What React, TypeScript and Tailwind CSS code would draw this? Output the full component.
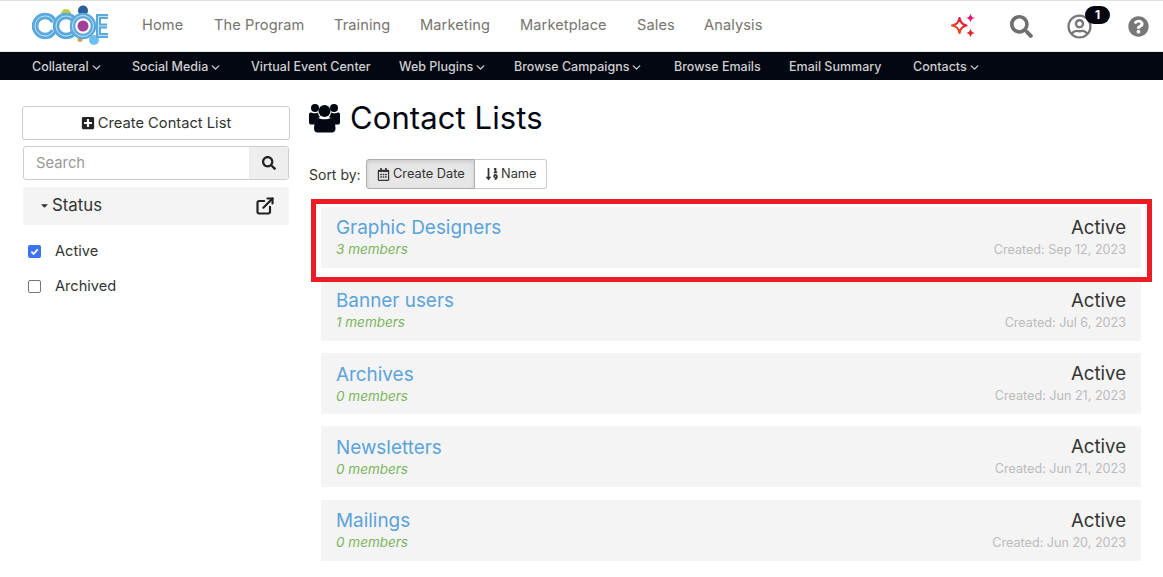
import { FaSearch, FaPlusSquare, FaRegCalendarAlt, FaSortNumericDown, FaQuestionCircle, FaRegUserCircle, FaCaretDown } from "react-icons/fa";
import { FiExternalLink, FiChevronDown } from "react-icons/fi";

const top = [
  ["Home", "w-[72px]"],
  ["The Program", "w-[120px]"],
  ["Training", "w-[86px]"],
  ["Marketing", "w-[100px]"],
  ["Marketplace", "w-[117px]"],
  ["Sales", "w-[67px]"],
  ["Analysis", "w-[70px]"],
];

const sub: [string, string, boolean][] = [
  ["Collateral", "w-[100px]", true],
  ["Social Media", "w-[119px]", true],
  ["Virtual Event Center", "w-[148px]", false],
  ["Web Plugins", "w-[115px]", true],
  ["Browse Campaigns", "w-[160px]", true],
  ["Browse Emails", "w-[115px]", false],
  ["Email Summary", "w-[124px]", false],
  ["Contacts", "w-[80px]", true],
];

const rows = [
  ["Graphic Designers", "3 members", "Created: Sep 12, 2023"],
  ["Banner users", "1 members", "Created: Jul 6, 2023"],
  ["Archives", "0 members", "Created: Jun 21, 2023"],
  ["Newsletters", "0 members", "Created: Jun 21, 2023"],
  ["Mailings", "0 members", "Created: Jun 20, 2023"],
];

function Ring({ cx }: { cx: number }) {
  return (
    <g fill="none" strokeDasharray="53 9.8" strokeDashoffset="-4.9">
      <circle cx={cx} cy="21" r="10" stroke="#5aa9dc" strokeWidth="6.5" />
      <circle cx={cx} cy="21" r="10" stroke="#c4e2f5" strokeWidth="1" />
    </g>
  );
}

function Logo() {
  return (
    <svg width="80" height="42" viewBox="0 0 80 42" className="shrink-0">
      <circle cx="34" cy="9" r="5" fill="#bfcf3c" />
      <circle cx="51" cy="5.5" r="5" fill="#2d5f9c" />
      <circle cx="48" cy="34.5" r="2.5" fill="#d6a24a" />
      <Ring cx={13} />
      <Ring cx={34} />
      <circle cx="51" cy="21" r="10.5" fill="#fff" stroke="#5aa9dc" strokeWidth="5.500" />
      <circle cx="51" cy="21" r="10.5" fill="none" stroke="#c4e2f5" strokeWidth="1" />
      <circle cx="51" cy="21" r="5.5" fill="#a43f98" />
      <circle cx="62" cy="35" r="5" fill="#6cc0ee" />
      <path d="M76 11.5H66.5V30.5H76M66.5 21H75" fill="none" stroke="#5aa9dc" strokeWidth="5" />
      <path d="M76 11.5H66.5V30.5H76M66.5 21H75" fill="none" stroke="#c4e2f5" strokeWidth="1" />
    </svg>
  );
}

function Sparkles() {
  return (
    <svg width="26" height="26" viewBox="0 0 26 26">
      <defs>
        <linearGradient id="sp" x1="0" y1="1" x2="1" y2="0">
          <stop offset="0" stopColor="#e8641c" />
          <stop offset="0.6" stopColor="#e5262c" />
          <stop offset="1" stopColor="#e9156f" />
        </linearGradient>
      </defs>
      <path d="M9.5 5 C10.3 9.5 12 11.6 16.5 12.5 C12 13.4 10.3 15.5 9.5 20 C8.7 15.5 7 13.4 2 12.5 C7 11.6 8.7 9.5 9.5 5Z" fill="none" stroke="url(#sp)" strokeWidth="2.2" strokeLinejoin="round" />
      <path d="M20.5 0.5 C21 3.4 22 4.4 25 5 C22 5.6 21 6.6 20.5 9.5 C20 6.6 19 5.6 16 5 C19 4.4 20 3.4 20.5 0.5Z" fill="#e9156f" />
      <path d="M20.5 15.5 C21 18.4 22 19.4 25 20 C22 20.6 21 21.6 20.5 24.5 C20 21.6 19 20.6 16 20 C19 19.4 20 18.4 20.5 15.5Z" fill="#e5262c" />
    </svg>
  );
}

function UsersIcon() {
  return (
    <svg width="33" height="31" viewBox="0 0 33 31" className="shrink-0" fill="#030711">
      <circle cx="7" cy="6" r="4" />
      <circle cx="26" cy="6" r="4" />
      <circle cx="16.5" cy="9" r="6" />
      <path d="M1 12.5c0-1.5 1-2 2-2 1.5 1 6 1 7 0 .3 2 1 3.5 2 4.5-3.5 1.5-5 4-5.5 7.5H2.5C1.5 22.500 1 21.500 1 20z" />
      <path d="M32 12.500c0-1.500-1-2-2-2-1.500 1-6 1-7 0-.3 2-1 3.500-2 4.500 3.500 1.500 5 4 5.500 7.500h4c1 0 1.500-1 1.500-2.500z" />
      <path d="M10.500 16c2.500 1.800 9.500 1.800 12 0 2.500 .3 4 2.500 4.500 5l.500 5.500c0 2.500-1.500 4-3.500 4H9.500c-2 0-3.500-1.500-3.500-4l.5-5.500c.5-2.500 2-4.700 4-5z" />
    </svg>
  );
}

export default function App() {
  return (
    <div className="relative w-[1163px] h-[577px] overflow-hidden bg-white text-[#333] font-['Inter','Liberation_Sans',sans-serif]">
      <header className="h-[52px] border-t border-t-[#e0e0e0] border-b border-b-[#e4e4e4] flex items-center">
        <div className="ml-[32px] w-[110px]"><Logo /></div>
        <nav className="flex items-center">
          {top.map(([t, w]) => (
            <div key={t} className={`${w} text-[14.6px] text-[#77736f] tracking-[0.1px] whitespace-nowrap`}>{t}</div>
          ))}
        </nav>
        <div className="ml-auto flex items-center">
          <div className="mr-[34px]"><Sparkles /></div>
          <FaSearch className="text-[23px] text-[#6f6f6f] mr-[34px]" />
          <div className="relative mr-[36px]">
            <FaRegUserCircle className="text-[25px] text-[#777]" />
            <span className="absolute -top-[8px] left-[18px] w-[25px] h-[18px] rounded-full bg-[#04070f] text-white text-[12px] font-bold flex items-center justify-center">1</span>
          </div>
          <FaQuestionCircle className="text-[21px] text-[#777] mr-[14px]" />
        </div>
      </header>
      <nav className="h-[28px] bg-[#030711] flex items-center pl-[32px] pt-[2px]">
        {sub.map(([t, w, c]) => (
          <div key={t} className={`${w} flex items-center gap-[1px] text-[12.5px] font-medium text-[#cfcfcf] whitespace-nowrap`}>
            {t}
            {c && <FiChevronDown className="text-[13px] stroke-[2.5]" />}
          </div>
        ))}
      </nav>
      <div className="flex">
        <aside className="ml-[22px] w-[268px] pt-[26px] shrink-0 text-[#333]">
          <button className="w-full h-[34px] border border-[#ccc] rounded-[3px] flex items-center justify-center gap-[3px] text-[14.7px]">
            <FaPlusSquare className="text-[14px] text-[#222]" /> Create Contact List
          </button>
          <div className="mx-px mt-[6px] h-[34px] border border-[#ccc] rounded-[3px] flex overflow-hidden">
            <div className="flex-1 pl-[12px] flex items-center text-[14.8px] text-[#999]">Search</div>
            <div className="w-[39px] bg-[#eee] flex items-center justify-center"><FaSearch className="text-[14px] text-[#222]" /></div>
          </div>
          <div className="mx-px mt-[7px] h-[38px] bg-[#f4f4f4] flex items-center pl-[16px] pr-[14px] pb-[1px]">
            <FaCaretDown className="text-[11px] text-[#333] mr-[2px]" />
            <span className="text-[16.8px]">Status</span>
            <FiExternalLink className="ml-auto text-[20px] text-[#222] stroke-[2.6]" />
          </div>
          <div className="mt-[18px] flex items-center h-[17px] pl-[6px]">
            <span className="w-[13px] h-[13px] rounded-[2px] bg-[#3b71f3] flex items-center justify-center">
              <svg width="9" height="9" viewBox="0 0 10 10"><path d="M1.5 5.2 4 7.7 8.6 2.6" fill="none" stroke="#fff" strokeWidth="2" /></svg>
            </span>
            <span className="ml-[14px] text-[14.6px]">Active</span>
          </div>
          <div className="mt-[18px] flex items-center h-[17px] pl-[6px]">
            <span className="w-[13px] h-[13px] rounded-[2px] border border-[#767676] bg-white" />
            <span className="ml-[14px] text-[14.6px]">Archived</span>
          </div>
        </aside>
        <main className="ml-[19px] w-[832px] pt-[17px]">
          <div className="flex items-center h-[40px]">
            <div className="-ml-px mr-px"><UsersIcon /></div>
            <h1 className="ml-[8px] text-[31px] text-[#030711] leading-none tracking-[0.1px]">Contact Lists</h1>
          </div>
          <div className="mt-[22px] flex items-center h-[30px]">
            <span className="text-[14px] w-[57px]">Sort by:</span>
            <div className="flex items-center gap-[3px] h-[30px] w-[109px] pl-[10px] bg-[#e6e6e6] border border-[#adadad] rounded-l-[3px] shadow-[inset_0_2px_4px_rgba(0,0,0,0.12)] text-[12.8px]">
              <FaRegCalendarAlt className="text-[13px]" /> Create Date
            </div>
            <div className="flex items-center gap-[2px] h-[30px] w-[72px] pl-[10px] border border-l-0 border-[#ccc] rounded-r-[3px] text-[12.8px]">
              <FaSortNumericDown className="text-[14px]" /> Name
            </div>
          </div>
          <div className="mt-[17.500px] ml-[12px] w-[820px]">
            {rows.map(([n, m, d]) => (
              <div key={n} className="h-[61px] mb-[12.33px] bg-[#f4f4f4] px-[15px] flex justify-between items-center">
                <div className="-mt-[1px]">
                  <div className="text-[18.900px] text-[#5ba3da] leading-[26px]">{n}</div>
                  <div className="text-[13.500px] italic text-[#7ab55c] leading-[18px] -mt-[1px]">{m}</div>
                </div>
                <div className="text-right -mt-[2px]">
                  <div className="text-[18.600px] text-[#333] leading-[26px]">Active</div>
                  <div className="text-[12.600px] text-[#bbb] leading-[18px] mt-[1px]">{d}</div>
                </div>
              </div>
            ))}
          </div>
        </main>
      </div>
      <div className="absolute left-[311px] top-[199px] w-[841px] h-[83px] border-[5px] border-[#ec1c24]" />
    </div>
  );
}
